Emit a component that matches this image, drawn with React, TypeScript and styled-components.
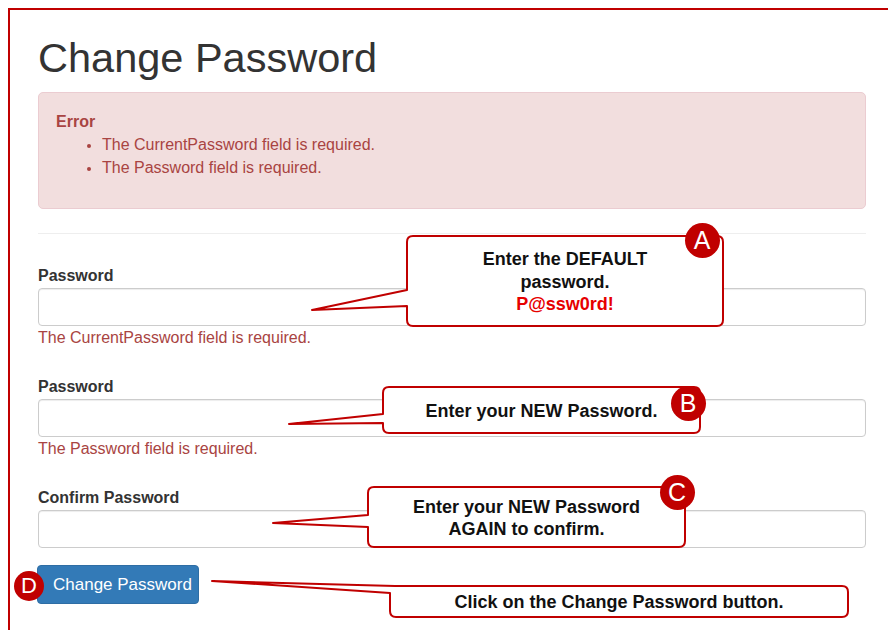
import React from 'react';
import styled, { createGlobalStyle } from 'styled-components';

const GlobalStyle = createGlobalStyle`
    html, body {
        margin: 0;
        padding: 0;
        background: #ffffff;
    }
    body {
        font-family: "Liberation Sans", Arial, Helvetica, sans-serif;
        color: #333;
    }
`;

const Page = styled.div`
    position: relative;
    width: 888px;
    height: 630px;
    overflow: hidden;
`;

const Frame = styled.div`
    display: flex;
    flex-direction: column;
    margin: 8px 0 0 8px;
    border-top: 2px solid #c00000;
    border-left: 2px solid #c00000;
    padding: 0 22px 40px 28px;
    min-height: 640px;
`;

const Title = styled.h1`
    font-size: 41.5px;
    font-weight: normal;
    line-height: 45px;
    margin: 25px 0 12px;
    color: #333;
`;

const Alert = styled.div`
    display: flex;
    flex-direction: column;
    background-color: #f2dede;
    border: 1px solid #ebccd1;
    border-radius: 5px;
    color: #a94442;
    padding: 17px 17px 0 17px;
    height: 98px;
    font-size: 16px;
    line-height: 23px;

    ul {
        margin: 0;
        padding-left: 46px;
    }

    li::marker {
        font-size: 13px;
    }
`;

const Divider = styled.hr`
    width: 100%;
    border: 0;
    border-top: 1px solid #eee;
    margin: 24px 0 30px;
`;

const Form = styled.form`
    display: flex;
    flex-direction: column;
    align-items: flex-start;
    gap: 17px;
`;

const FormGroup = styled.div`
    display: flex;
    flex-direction: column;
    align-self: stretch;
`;

const Label = styled.label`
    font-size: 16px;
    font-weight: bold;
    line-height: 23px;
    margin-bottom: 1px;
    color: #333;
`;

const Input = styled.input`
    box-sizing: border-box;
    width: 100%;
    height: 38px;
    border: 1px solid #ccc;
    border-radius: 4px;
    box-shadow: inset 0 1px 1px rgba(0, 0, 0, 0.075);
    font-size: 16px;
    padding: 6px 14px;
    margin: 0;
    outline: none;
`;

const FieldError = styled.span`
    font-size: 16px;
    line-height: 23px;
    color: #a94442;
    margin-bottom: 9px;
`;

const Button = styled.button`
    box-sizing: border-box;
    height: 39px;
    width: 162px;
    margin-left: -1px;
    padding: 0 0 0 15px;
    text-align: left;
    background-color: #337ab7;
    border: 1px solid #2e6da4;
    border-radius: 4px;
    color: #fff;
    font-family: "Liberation Sans", Arial, sans-serif;
    font-size: 17px;
    cursor: pointer;
`;

// annotation layer: speech bubbles and letter markers drawn over the form
const Bubble = styled.div<{ $left: number; $top: number; $w: number; $h: number }>`
    position: absolute;
    left: ${p => p.$left}px;
    top: ${p => p.$top}px;
    width: ${p => p.$w}px;
    height: ${p => p.$h}px;

    svg {
        position: absolute;
        left: 0;
        top: 0;
        overflow: visible;
    }
`;

const BubbleText = styled.div`
    position: relative;
    box-sizing: border-box;
    height: 100%;
    padding-top: 2px;
    display: flex;
    flex-direction: column;
    align-items: center;
    justify-content: center;
    text-align: center;
    font-size: 18px;
    font-weight: bold;
    line-height: 22.5px;
    color: #111;
`;

const Secret = styled.span`
    color: #e60000;
`;

const Marker = styled.div<{ $x: number; $y: number; $size: number }>`
    position: absolute;
    left: ${p => p.$x - p.$size / 2}px;
    top: ${p => p.$y - p.$size / 2}px;
    width: ${p => p.$size}px;
    height: ${p => p.$size}px;
    border-radius: 50%;
    background: #c00000;
    color: #fff;
    display: flex;
    align-items: center;
    justify-content: center;
    font-size: ${p => Math.round(p.$size * 0.72)}px;
    line-height: 1;
`;

type Tail = { y1: number; y2: number; x: number; y: number; corner?: boolean };

const bubblePath = (w: number, h: number, t: Tail) => {
    const r = 6;
    const start = t.corner ? `M 5,0` : `M ${r},0`;
    const end = t.corner
        ? `Z`
        : `L 0,${t.y1} V ${r} Q 0,0 ${r},0 Z`;
    return `${start} H ${w - r} Q ${w},0 ${w},${r} V ${h - r} Q ${w},${h} ${w - r},${h} H ${r} Q 0,${h} 0,${h - r} V ${t.y2} L ${t.x},${t.y} ${end}`;
};

const Callout = ({ left, top, w, h, tail, children }: {
    left: number; top: number; w: number; h: number; tail: Tail; children: React.ReactNode;
}) => (
    <Bubble $left={left} $top={top} $w={w} $h={h}>
        <svg width={w} height={h}>
            <path d={bubblePath(w, h, tail)} fill="#fff" stroke="#c00000" strokeWidth={2} strokeLinejoin="round" />
        </svg>
        <BubbleText>{children}</BubbleText>
    </Bubble>
);

const App = () => {
    return (
        <Page>
            <GlobalStyle />
            <Frame>
                <Title>Change Password</Title>
                <Alert>
                    <strong>Error</strong>
                    <ul>
                        <li>The CurrentPassword field is required.</li>
                        <li>The Password field is required.</li>
                    </ul>
                </Alert>
                <Divider />

                <Form onSubmit={e => e.preventDefault()}>
                    <FormGroup>
                        <Label>Password</Label>
                        <Input type="password" />
                        <FieldError>The CurrentPassword field is required.</FieldError>
                    </FormGroup>

                    <FormGroup>
                        <Label>Password</Label>
                        <Input type="password" />
                        <FieldError>The Password field is required.</FieldError>
                    </FormGroup>

                    <FormGroup>
                        <Label>Confirm Password</Label>
                        <Input type="password" />
                    </FormGroup>

                    <Button type="submit">Change Password</Button>
                </Form>
            </Frame>

            <Callout left={407} top={236} w={316} h={90} tail={{ y1: 54, y2: 70, x: -95, y: 74 }}>
                <span>Enter the DEFAULT</span>
                <span>password.</span>
                <Secret>P@ssw0rd!</Secret>
            </Callout>
            <Marker $x={702} $y={240} $size={35}>A</Marker>

            <Callout left={383} top={387} w={317} h={46} tail={{ y1: 27, y2: 36, x: -94, y: 37 }}>
                <span>Enter your NEW Password.</span>
            </Callout>
            <Marker $x={688} $y={403} $size={35}>B</Marker>

            <Callout left={368} top={487} w={317} h={60} tail={{ y1: 28, y2: 40, x: -95, y: 36 }}>
                <span>Enter your NEW Password</span>
                <span>AGAIN to confirm.</span>
            </Callout>
            <Marker $x={677} $y={492} $size={35}>C</Marker>

            <Callout left={390} top={586} w={458} h={31} tail={{ y1: 0, y2: 7, x: -178, y: -5, corner: true }}>
                <span>Click on the Change Password button.</span>
            </Callout>
            <Marker $x={29} $y={586} $size={30}>D</Marker>
        </Page>
    );
};

export default App;
